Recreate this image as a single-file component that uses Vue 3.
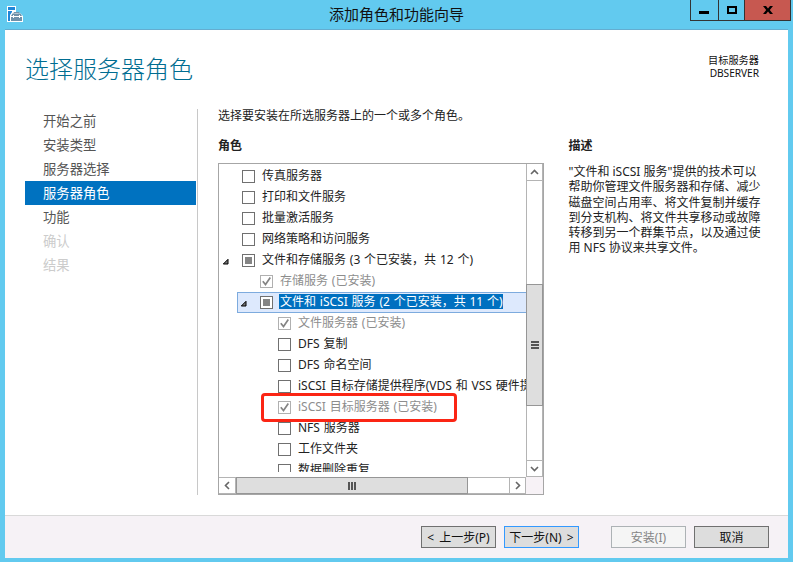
<script setup>
const steps = [
  { label: '开始之前' },
  { label: '安装类型' },
  { label: '服务器选择' },
  { label: '服务器角色', state: 'active' },
  { label: '功能' },
  { label: '确认', state: 'off' },
  { label: '结果', state: 'off' },
]

const roles = [
  { label: '传真服务器', level: 0 },
  { label: '打印和文件服务', level: 0 },
  { label: '批量激活服务', level: 0 },
  { label: '网络策略和访问服务', level: 0 },
  { label: '文件和存储服务 (3 个已安装，共 12 个)', level: 0, check: 'partial', open: true },
  { label: '存储服务 (已安装)', level: 1, check: 'done' },
  { label: '文件和 iSCSI 服务 (2 个已安装，共 11 个)', level: 1, check: 'partial', open: true, selected: true },
  { label: '文件服务器 (已安装)', level: 2, check: 'done' },
  { label: 'DFS 复制', level: 2 },
  { label: 'DFS 命名空间', level: 2 },
  { label: 'iSCSI 目标存储提供程序(VDS 和 VSS 硬件提供程序)', level: 2 },
  { label: 'iSCSI 目标服务器 (已安装)', level: 2, check: 'done', marked: true },
  { label: 'NFS 服务器', level: 2 },
  { label: '工作文件夹', level: 2 },
  { label: '数据删除重复', level: 2 },
]

const description = [
  '"文件和 iSCSI 服务"提供的技术可以',
  '帮助你管理文件服务器和存储、减少',
  '磁盘空间占用率、将文件复制并缓存',
  '到分支机构、将文件共享移动或故障',
  '转移到另一个群集节点，以及通过使',
  '用 NFS 协议来共享文件。',
]
</script>

<template>
  <div class="window">
    <header class="titlebar">
      <svg class="app-icon" width="18" height="18" viewBox="0 0 18 18">
        <path d="M1 1h9v6l4 1 3 3v6H1z" fill="#fff" />
        <path d="M2 2h7v3H2zM2 6h4v1L4 10v6H2z" fill="#1f86d8" />
        <path d="M5 12h2v1h1v-1h5v1h1v-1h2v4H5zM5 11l1.500-2.500h8L16 11z" fill="#6f91aa" />
        <path d="M8 8.500V7.500h5v1" fill="none" stroke="#6f91aa" />
        <path d="M7.500 10v3M13.500 10v3" stroke="#fff" />
      </svg>
      <h1 class="title">添加角色和功能向导</h1>
      <div class="controls">
        <span class="ctl"><svg width="27" height="20"><path d="M8 11h10v3H8z" /></svg></span>
        <span class="ctl max"><svg width="25" height="20"><path d="M9 7h8v6H9z" fill="none" stroke="#000" stroke-width="2" /></svg></span>
        <span class="ctl close"><svg width="45" height="20"><path d="M18 6h3l2 2.500L25 6h3l-3.200 4L28 14h-3l-2-2.500L21 14h-3l3.200-4z" /></svg></span>
      </div>
    </header>

    <main class="page">
      <div class="heading">
        <h2>选择服务器角色</h2>
        <div class="target"><div>目标服务器</div><div class="host">DBSERVER</div></div>
      </div>

      <div class="columns">
        <nav class="steps">
          <div v-for="s in steps" :key="s.label" class="step" :class="s.state">{{ s.label }}</div>
        </nav>

        <section class="content">
          <p class="intro">选择要安装在所选服务器上的一个或多个角色。</p>
          <h3>角色</h3>
          <div class="listbox">
            <div class="tree">
              <div v-for="r in roles" :key="r.label" class="row" :class="['level' + r.level, r.check, { selected: r.selected }]">
                <span class="toggle">
                  <svg v-if="r.open" width="7" height="7"><path d="M6 1.300v4.700H1.300z" fill="#777" stroke="#000" /></svg>
                </span>
                <span class="box">
                  <svg v-if="r.check === 'done'" width="11" height="11"><path d="M1.800 5.200l2.700 3.300L9.300 1.600" fill="none" stroke="#848484" stroke-width="1.700" /></svg>
                  <i v-else-if="r.check === 'partial'" />
                </span>
                <span class="label">{{ r.label }}</span>
                <span v-if="r.marked" class="marker" />
              </div>
            </div>
            <div class="vbar">
              <span class="arrow"><svg width="15" height="16"><path d="M4 10l3.500-3.500L11 10" /></svg></span>
              <span class="track" />
              <span class="thumb"><b /><b /><b /></span>
              <span class="track rest" />
              <span class="arrow down"><svg width="15" height="15"><path d="M4 6l3.500 3.500L11 6" /></svg></span>
            </div>
            <div class="hbar">
              <span class="arrow"><svg width="16" height="15"><path d="M10 4L6.500 7.500 10 11" /></svg></span>
              <span class="thumb"><b /><b /><b /></span>
              <span class="track" />
              <span class="arrow right"><svg width="15" height="15"><path d="M6 4l3.500 3.500L6 11" /></svg></span>
            </div>
            <div class="corner" />
          </div>
        </section>

        <aside class="details">
          <h3>描述</h3>
          <p><span v-for="line in description" :key="line">{{ line }}</span></p>
        </aside>
      </div>
    </main>

    <footer class="footer">
      <button>&lt; 上一步(P)</button>
      <button class="primary">下一步(N) &gt;</button>
      <button class="disabled">安装(I)</button>
      <button class="cancel">取消</button>
    </footer>
  </div>
</template>

<style>
body { margin: 0; overflow: hidden; }
</style>

<style scoped>
* { box-sizing: border-box; }
h1, h2, h3, p { margin: 0; font-weight: 400; }
svg { display: block; }
.window {
  width: 793px;
  height: 562px;
  padding: 0 5px 4px;
  display: flex;
  flex-direction: column;
  background: #62caef;
  color: #222;
  font: 12px/16px "Noto Sans", "Noto Sans CJK SC", sans-serif;
  white-space: nowrap;
}
.titlebar {
  height: 30px;
  flex: none;
  display: grid;
  grid-template-columns: 104px 1fr 104px;
  border-bottom: 1px solid #64add0;
}
.app-icon { margin: 5px 0 0 1px; }
.title { font-size: 15px; line-height: 29px; text-align: center; color: #111; }
.controls {
  width: 101px;
  height: 21px;
  margin-left: 6px;
  display: flex;
  border: 1px solid #333;
  border-top: 0;
}
.ctl + .ctl { border-left: 1px solid #333; }
.close { flex: 1; background: #c75850; }
.page { flex: 1; background: #fff; padding: 0 20px; }
.heading { height: 79px; display: flex; justify-content: space-between; }
h2 { font-size: 24px; line-height: 36px; padding-top: 21px; color: #006d91; font-weight: 300; }
.target { padding: 24px 9px 0 0; font-size: 10.200px; line-height: 13px; text-align: right; color: #111; }
.host { letter-spacing: -0.050px; }
.columns { display: grid; grid-template-columns: 173px 370px 1fr; }
.steps { height: 386px; border-right: 1px solid #c8c8c8; padding: 0 1px 0 0; }
.step { height: 24px; padding: 1px 0 0 18px; font-size: 13.330px; line-height: 23px; color: #555; }
.step.active { background: #0072c0; color: #fff; }
.step.off { color: #ccc; }
.content { padding-left: 20px; }
.intro { line-height: 14px; }
h3 { font-size: 12px; font-weight: 700; line-height: 16px; }
.content h3 { margin: 15px 0 9px; }
.listbox {
  width: 326px;
  height: 332px;
  display: grid;
  grid-template-columns: 307px 17px;
  grid-template-rows: 313px 17px;
  border: 1px solid #a6a6a6;
}
.tree { padding-top: 2px; height: 308px; overflow: hidden; }
.row { position: relative; height: 21px; display: flex; align-items: center; border: 1px solid transparent; border-right: 0; }
.level1 { margin-left: 18px; }
.level2 { margin-left: 36px; }
.toggle { flex: none; width: 7px; margin: 2px 13px 0 2px; }
.box { flex: none; width: 13px; height: 13px; border: 1px solid #707070; background: #fff; margin-right: 5px; }
.box i { display: block; width: 7px; height: 7px; margin: 2px; background: #858585; }
.label { flex: none; padding-left: 2px; margin-bottom: 2px; line-height: 15px; word-spacing: 0.700px; }
.done { color: #8d8d8d; }
.done .box { border-color: #b0b0b0; }
.selected { background: #dde9fd; border-color: #7dabde; }
.selected .label { background: #0070c0; color: #fff; padding-left: 1px; margin-left: 1px; }
.marker {
  position: absolute;
  left: 5px;
  top: -5px;
  width: 196px;
  height: 29px;
  border: 3px solid #fb2514;
  border-radius: 4px;
  z-index: 1;
}
.vbar { display: flex; flex-direction: column; border: 1px solid #b4b4b4; border-top: 0; }
.arrow { flex: none; height: 17px; border-bottom: 1px solid #b4b4b4; background: #fff; }
.arrow path { fill: none; stroke: #666; stroke-width: 1.600; }
.down { border-top: 1px solid #b4b4b4; border-bottom: 0; height: 16px; }
.vbar .track { height: 103px; }
.vbar .rest { flex: 1; height: auto; }
.thumb { display: flex; justify-content: center; align-items: center; gap: 1px; background: #dedede; border: 1px solid #969696; }
.vbar .thumb { height: 122px; margin: 0 -1px; flex-direction: column; gap: 1px; }
.vbar b { width: 8px; height: 2px; background: #555; }
.hbar { display: flex; border: 1px solid #b4b4b4; border-left: 0; }
.hbar .arrow { width: 17px; height: 15px; border: 0; border-right: 1px solid #b4b4b4; }
.hbar .thumb { width: 232px; margin: -1px 0; }
.hbar b { width: 2px; height: 8px; background: #555; }
.hbar .track { flex: 1; }
.hbar .right { width: 16px; border-left: 1px solid #b4b4b4; border-right: 0; }
.corner { background: #f7f2f6; }
.details { padding-left: 0.500px; }
.details h3 { margin: 29px 0 10px; }
.details p span { display: block; line-height: 15.300px; }
.footer {
  height: 43px;
  flex: none;
  display: flex;
  align-items: flex-start;
  padding: 10px 0 0 416px;
  background: #f6f2f6;
  border-top: 1px solid #d9d9d9;
}
button {
  width: 75px;
  height: 22px;
  padding: 1px 0 0;
  border: 1px solid #707070;
  background: #dddddd;
  color: #111;
  font: inherit;
  line-height: 20px;
  word-spacing: 2px;
}
.primary { margin-left: 8px; border-color: #3399ff; }
.disabled { margin-left: 32px; background: #f5f5f5; border-color: #adb2b5; color: #858585; }
.cancel { margin-left: 8px; }
</style>
